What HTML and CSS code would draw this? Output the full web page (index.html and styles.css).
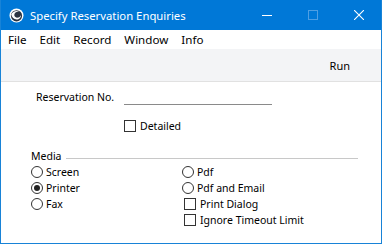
FILE: index.html
```html
<!DOCTYPE html>
<html>
<head>
<meta charset="utf-8">
<link rel="stylesheet" href="styles.css">
</head>
<body>
<div class="window">
  <div class="titlebar">
    <svg class="appicon" width="15" height="15" viewBox="0 0 15 15">
      <circle cx="7.5" cy="7.5" r="7" fill="#ffffff"/>
      <circle cx="7.5" cy="7.8" r="5.6" fill="#2b3442"/>
      <path d="M2.2 6.5 C3.5 3.2 7.5 2.2 10.5 3.6 C8 3.4 5.6 4.6 5.3 6.8 C5.1 8.8 7.2 10.2 9.4 9.6 C10.8 9.2 11.6 8.2 11.8 7 C12.3 9.6 10 11.6 7.6 11.5 C4.8 11.4 3 9.2 2.2 6.5 Z" fill="#ffffff"/>
    </svg>
    <span class="title">Specify Reservation Enquiries</span>
    <div class="controls">
      <span class="ctl"><svg width="10" height="10" viewBox="0 0 10 10"><path d="M0 5.5 H10" stroke="#fff" stroke-width="1"/></svg></span>
      <span class="ctl"><svg width="10" height="10" viewBox="0 0 10 10"><rect x="0.5" y="0.5" width="9" height="9" fill="none" stroke="#4f9fe3" stroke-width="1"/></svg></span>
      <span class="ctl"><svg width="10" height="10" viewBox="0 0 10 10"><path d="M0 0 L10 10 M10 0 L0 10" stroke="#fff" stroke-width="1.1"/></svg></span>
    </div>
  </div>
  <div class="menubar">
    <span class="menu">File</span>
    <span class="menu">Edit</span>
    <span class="menu">Record</span>
    <span class="menu">Window</span>
    <span class="menu">Info</span>
  </div>
  <div class="toolbar">
    <span class="run">Run</span>
  </div>
  <div class="content">
    <div class="row field-row">
      <span class="label">Reservation No.</span>
      <span class="field"></span>
    </div>
    <div class="row check-row">
      <span class="check"><span class="box"></span>Detailed</span>
    </div>
    <div class="group">
      <div class="group-head"><span class="group-title">Media</span><span class="group-line"></span></div>
      <div class="cols">
        <div class="col left">
          <div class="opt"><span class="radio"></span>Screen</div>
          <div class="opt"><span class="radio on"></span>Printer</div>
          <div class="opt"><span class="radio"></span>Fax</div>
        </div>
        <div class="col right">
          <div class="opt"><span class="radio"></span>Pdf</div>
          <div class="opt"><span class="radio"></span>Pdf and Email</div>
          <div class="opt cb"><span class="box"></span>Print Dialog</div>
          <div class="opt cb"><span class="box"></span>Ignore Timeout Limit</div>
        </div>
      </div>
    </div>
  </div>
</div>
</body>
</html>
```
FILE: styles.css
```css
* { box-sizing: border-box; }
html, body { margin: 0; padding: 0; background: #fff; }
body { font-family: "Noto Sans", "DejaVu Sans", sans-serif; font-size: 10.5px; color: #000; white-space: nowrap; }
.window {
  width: 382px; height: 244px;
  border: 1px solid #1883d7; border-top: none;
  display: flex; flex-direction: column;
  background: #fff;
  overflow: hidden;
}
.titlebar {
  height: 30px; margin: 0 -1px;
  background: #0078d7; color: #fff;
  display: flex; align-items: center;
  padding-left: 9px;
}
.appicon { display: block; margin-right: 6px; }
.title { font-size: 11.3px; flex: 1; }
.controls { display: flex; height: 30px; }
.ctl { width: 46px; display: flex; align-items: center; justify-content: center; }
.ctl svg { display: block; }
.menubar {
  height: 19px; display: flex; align-items: center;
  padding-left: 7px; background: #fff; font-size: 11.6px;
}
.menu { margin-right: 13px; }
.toolbar {
  height: 33px; background: #f3f4f6;
  border-bottom: 1px solid #e1e1e1;
  display: flex; align-items: center; justify-content: flex-end;
  padding-right: 31px; font-size: 11px;
}
.content { flex: 1; padding-top: 7px; }
.row { display: flex; align-items: center; }
.field-row { height: 16px; padding-left: 35px; }
.label { width: 88px; }
.field { width: 148px; height: 10px; border-bottom: 1px solid #8a8a8a; margin-top: 5px; }
.check-row { height: 16px; padding-left: 123px; margin-top: 13px; }
.check, .opt { display: flex; align-items: center; }
.box { width: 12px; height: 12px; border: 1px solid #333; background: #fff; margin-right: 4px; }
.group { padding-left: 30px; padding-right: 23px; margin-top: 14px; }
.group-head { display: flex; align-items: center; height: 16px; }
.group-title { margin-right: 4px; }
.group-line { flex: 1; border-top: 1px solid #c8c8c8; margin-top: 5px; }
.cols { display: flex; }
.col { display: flex; flex-direction: column; }
.left { width: 151px; }
.opt { height: 16px; }
.radio {
  width: 12px; height: 12px; border: 1px solid #333; border-radius: 50%;
  margin-right: 3px; position: relative; background: #fff;
}
.radio.on::after {
  content: ""; position: absolute; left: 2px; top: 2px;
  width: 6px; height: 6px; border-radius: 50%; background: #222;
}
.cb { padding-left: 2px; }
```
